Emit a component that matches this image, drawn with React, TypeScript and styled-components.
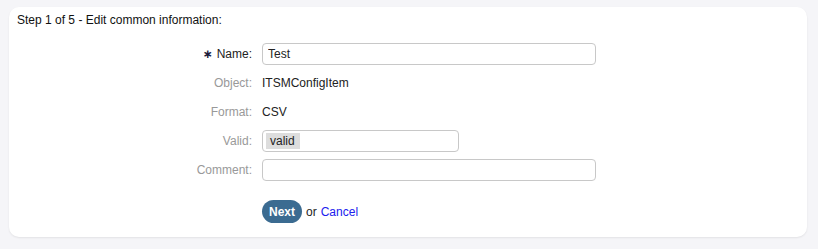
import React from "react";
import styled, { createGlobalStyle } from "styled-components";

const Global = createGlobalStyle`
  html, body { margin: 0; padding: 0; background: #f5f5f8; }
  body { font-family: "Liberation Sans", Arial, sans-serif; font-size: 12px; color: #222; }
`;

const Page = styled.div`
  padding: 7px 11px 12px 9px;
`;

const Card = styled.div`
  background: #fff;
  border-radius: 10px;
  box-shadow: 0 1px 2px rgba(0, 0, 0, 0.08);
  height: 230px;
  box-sizing: border-box;
  padding: 5px 8px 0 8px;
`;

const Title = styled.h2`
  margin: 0;
  font-size: 12px;
  font-weight: normal;
  line-height: 16px;
  color: #111;
`;

const Form = styled.div`
  margin-top: 12px;
  display: grid;
  grid-template-columns: 235px 1fr;
  column-gap: 10px;
  row-gap: 1px;
  grid-auto-rows: 28px;
  align-items: center;
`;

const Label = styled.label<{ $required?: boolean }>`
  text-align: right;
  color: ${(p) => (p.$required ? "#222" : "#999")};
  line-height: 16px;
`;

const Star = styled.span`
  font-family: "DejaVu Sans", sans-serif;
  font-size: 12px;
  font-weight: bold;
  margin-right: 4px;
  color: #1a1a3a;
`;

const Value = styled.div`
  color: #222;
`;

const Input = styled.input<{ $w: number }>`
  width: ${(p) => p.$w}px;
  height: 22px;
  box-sizing: border-box;
  border: 1px solid #c8c8c8;
  border-radius: 4px;
  padding: 0 5px;
  font-family: "Liberation Sans", Arial, sans-serif;
  font-size: 12px;
  color: #222;
  outline: none;
`;

const Select = styled.div`
  width: 197px;
  height: 22px;
  box-sizing: border-box;
  border: 1px solid #c8c8c8;
  border-radius: 4px;
  padding: 2px 3px;
  display: flex;
  align-items: center;
`;

const Chip = styled.span`
  background: #dddddd;
  padding: 1px 5px 1px 4px;
  line-height: 14px;
  color: #222;
`;

const Actions = styled.div`
  margin: 16px 0 0 245px;
  display: flex;
  align-items: center;
  gap: 4px;
`;

const Button = styled.button`
  background: #3b6b91;
  color: #fff;
  font-family: "Liberation Sans", Arial, sans-serif;
  font-weight: bold;
  font-size: 12px;
  border: none;
  border-radius: 12px;
  height: 23px;
  padding: 0 7px;
`;

const Link = styled.a`
  color: #2020ee;
  text-decoration: none;
`;

export default function App() {
  return (
    <>
      <Global />
      <Page>
        <Card>
          <Title>Step 1 of 5 - Edit common information:</Title>
          <Form>
            <Label $required>
              <Star>∗</Star>Name:
            </Label>
            <div>
              <Input $w={334} defaultValue="Test" />
            </div>
            <Label>Object:</Label>
            <Value>ITSMConfigItem</Value>
            <Label>Format:</Label>
            <Value>CSV</Value>
            <Label>Valid:</Label>
            <div>
              <Select>
                <Chip>valid</Chip>
              </Select>
            </div>
            <Label>Comment:</Label>
            <div>
              <Input $w={334} />
            </div>
          </Form>
          <Actions>
            <Button>Next</Button>
            <span>or</span>
            <Link href="#">Cancel</Link>
          </Actions>
        </Card>
      </Page>
    </>
  );
}
